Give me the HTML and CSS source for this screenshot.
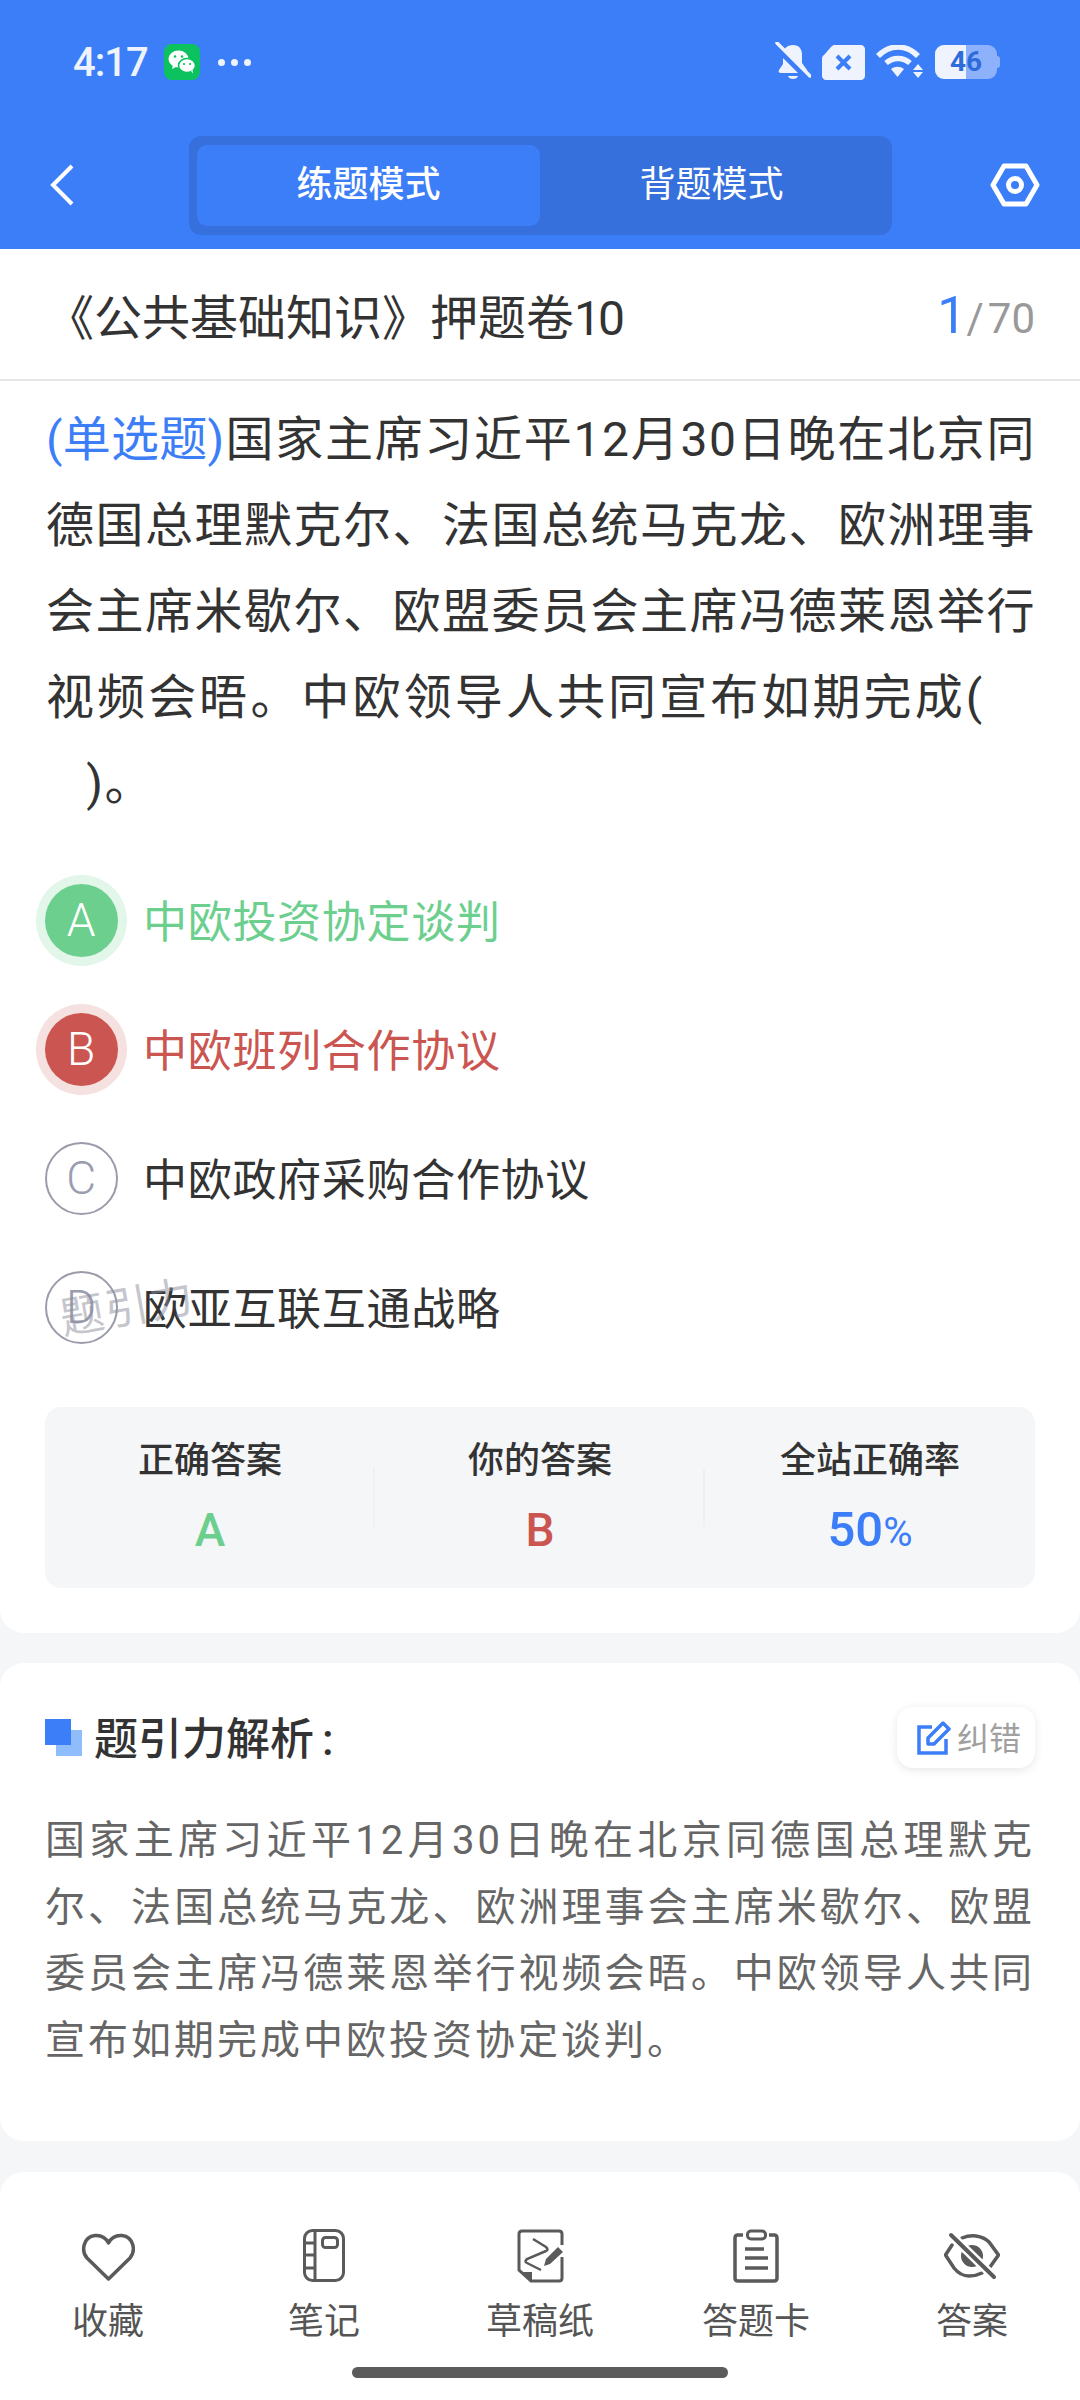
FILE: index.html
```html
<!DOCTYPE html>
<html lang="zh-CN">
<head>
    <meta charset="UTF-8">
    <meta name="viewport" content="width=device-width, initial-scale=1.0">
    <title>题引力</title>
    <link rel="stylesheet" href="styles.css">
</head>
<body>
    <div class="topbar">
        <div class="status">
            <span class="time">4:17</span>
            <svg class="wechat" viewBox="0 0 36 36" width="36" height="36">
                <rect width="36" height="36" rx="8" fill="#0cc25f"/>
                <ellipse cx="14.5" cy="15" rx="10" ry="8.5" fill="#fff"/>
                <path d="M9 21l-1 4 5-2.500z" fill="#fff"/>
                <ellipse cx="23" cy="21.500" rx="8.500" ry="7" fill="#fff" stroke="#0cc25f" stroke-width="1.500"/>
                <path d="M27 27l2 2.500-.5-4z" fill="#fff"/>
                <circle cx="11" cy="12.500" r="1.300" fill="#0cc25f"/>
                <circle cx="18" cy="12.500" r="1.300" fill="#0cc25f"/>
                <circle cx="20" cy="20" r="1.100" fill="#0cc25f"/>
                <circle cx="26" cy="20" r="1.100" fill="#0cc25f"/>
            </svg>
            <span class="dots"><i></i><i></i><i></i></span>
            <span class="status-right">
                <svg viewBox="0 0 36 40" width="36" height="40">
                    <path d="M18 3c6 0 9 4 9 10v8l5 7c1 2 0 3-2 3H6c-2 0-3-1-2-3l4-6v-9c0-6 4-10 10-10z" fill="#eef3fe"/>
                    <path d="M13 34h10c-1 4-9 4-10 0z" fill="#eef3fe"/>
                    <path d="M1 4l33 33" stroke="#3b7ef8" stroke-width="7"/>
                    <path d="M2 1l33 33" stroke="#eef3fe" stroke-width="3.500" stroke-linecap="round"/>
                </svg>
                <svg viewBox="0 0 43 35" width="43" height="35">
                    <path d="M12 0h27c2 0 4 2 4 4v27c0 2-2 4-4 4H4c-2 0-4-2-4-4V14c0-2 .5-3 2-4l7-8c1-1 2-2 3-2z" fill="#eef3fe"/>
                    <path d="M15 11l13 13M28 11L15 24" stroke="#3b7ef8" stroke-width="4"/>
                </svg>
                <svg viewBox="0 0 48 34" width="48" height="34">
                    <path d="M2 11C14-1 30-1 42 11" stroke="#eef3fe" stroke-width="5.500" fill="none"/>
                    <path d="M10 18c7-6 17-6 24 0" stroke="#eef3fe" stroke-width="5.500" fill="none"/>
                    <path d="M15 24c4-3 9-3 13 0l-6.500 8z" fill="#eef3fe"/>
                    <path d="M42 19l5 6H37zM37 27h10l-5 6z" fill="#eef3fe"/>
                </svg>
                <span class="battery"><span class="battery-fill"></span><span class="battery-cap"></span><span class="battery-num">46</span></span>
            </span>
        </div>
        <div class="nav">
            <svg class="back" viewBox="0 0 24 42" width="24" height="42">
                <path d="M22 2L3 21l19 19" stroke="#fff" stroke-width="4" fill="none"/>
            </svg>
            <div class="tabs">
                <div class="tab active">练题模式</div>
                <div class="tab">背题模式</div>
            </div>
            <svg class="hex" viewBox="0 0 50 44" width="50" height="44">
                <path d="M14 3h22l11 19-11 19H14L3 22z" stroke="#fff" stroke-width="5" stroke-linejoin="round" fill="none"/>
                <circle cx="25" cy="22" r="6.500" stroke="#fff" stroke-width="5" fill="none"/>
            </svg>
        </div>
    </div>

    <div class="card main-card">
        <div class="paper">
            <div class="paper-title">《公共基础知识》押题卷<span class="num">10</span></div>
            <div class="paper-count"><span class="now">1</span><span class="sep">/</span>70</div>
        </div>
        <div class="question"><span class="qtype">(单选题)</span>国家主席习近平12月30日晚在北京同德国总理默克尔、法国总统马克龙、欧洲理事会主席米歇尔、欧盟委员会主席冯德莱恩举行<span class="stretch">视频会晤。中欧领导人共同宣布如期完成(</span><br>&nbsp;&nbsp;&nbsp;)。</div>
        <div class="options">
            <div class="option right"><span class="letter">A</span><span class="option-text">中欧投资协定谈判</span></div>
            <div class="option wrong"><span class="letter">B</span><span class="option-text">中欧班列合作协议</span></div>
            <div class="option"><span class="letter">C</span><span class="option-text">中欧政府采购合作协议</span></div>
            <div class="option"><span class="letter">D</span><span class="option-text">欧亚互联互通战略</span></div>
            <div class="watermark">题引力</div>
        </div>
        <div class="result">
            <div class="result-col">
                <div class="result-label">正确答案</div>
                <div class="result-value green">A</div>
            </div>
            <div class="result-col">
                <div class="result-label">你的答案</div>
                <div class="result-value red">B</div>
            </div>
            <div class="result-col">
                <div class="result-label">全站正确率</div>
                <div class="result-value blue">50<small>%</small></div>
            </div>
        </div>
    </div>

    <div class="card analysis">
        <div class="analysis-head">
            <div class="analysis-title"><span class="squares"></span><span class="title-text">题引力解析<span class="colon">:</span></span></div>
            <div class="report">
                <svg viewBox="0 0 34 34" width="34" height="34">
                    <path d="M15 6H2v26h27V18" stroke="#3b7ef8" stroke-width="3.500" fill="none"/>
                    <path d="M11 23v-6L26 2l6 6-15 15z" stroke="#3b7ef8" stroke-width="3.500" fill="none" stroke-linejoin="round"/>
                </svg>
                <span class="report-text">纠错</span>
            </div>
        </div>
        <div class="analysis-text">国家主席习近平12月30日晚在北京同德国总理默克尔、法国总统马克龙、欧洲理事会主席米歇尔、欧盟委员会主席冯德莱恩举行视频会晤。中欧领导人共同宣布如期完成中欧投资协定谈判。</div>
    </div>

    <div class="card toolbar">
        <div class="tools">
            <div class="tool">
                <svg viewBox="0 0 54 54" width="54" height="54">
                    <path d="M27.500 50L6 29C0 22 2 8 14 6.500 20 6 25 9 27.500 14 30 9 35 6 41 6.500 53 8 55 22 49 29z" stroke="#5a5a5a" stroke-width="3.500" fill="none" stroke-linejoin="round"/>
                </svg>
                <span>收藏</span>
            </div>
            <div class="tool">
                <svg viewBox="0 0 54 54" width="54" height="54">
                    <rect x="7.500" y="1.500" width="39" height="50" rx="8" stroke="#5a5a5a" stroke-width="3" fill="none"/>
                    <path d="M18 2v49M7 14h11M7 26h11M7 39h11" stroke="#5a5a5a" stroke-width="3" fill="none"/>
                    <rect x="25.500" y="8.500" width="15" height="10" rx="3" stroke="#5a5a5a" stroke-width="3" fill="none"/>
                </svg>
                <span>笔记</span>
            </div>
            <div class="tool">
                <svg viewBox="0 0 54 54" width="54" height="54">
                    <path d="M49 16V5c0-2-1-3-3-3H9C7 2 6 3 6 5v36l12 11h28c2 0 3-1 3-3V28" stroke="#5a5a5a" stroke-width="3" fill="none"/>
                    <path d="M7 43h12v9z" fill="#5a5a5a"/>
                    <path d="M20 10l13 8c2 2 2 3 0 4L14 30c-2 2-2 3 0 4l14 7" stroke="#5a5a5a" stroke-width="2.500" fill="none"/>
                    <path d="M45 18l5 5-13 12-6 2 2-7z" fill="#5a5a5a"/>
                </svg>
                <span>草稿纸</span>
            </div>
            <div class="tool">
                <svg viewBox="0 0 54 54" width="54" height="54">
                    <path d="M14 6h-5C7 6 6 7 6 9v40c0 2 1 3 3 3h36c2 0 3-1 3-3V9c0-2-1-3-3-3h-5" stroke="#5a5a5a" stroke-width="3.500" fill="none"/>
                    <rect x="18.500" y="2" width="18" height="8" rx="3.500" stroke="#5a5a5a" stroke-width="3" fill="none"/>
                    <path d="M16 20h19M16 29h23M16 39h23" stroke="#5a5a5a" stroke-width="3.500" fill="none"/>
                </svg>
                <span>答题卡</span>
            </div>
            <div class="tool">
                <svg viewBox="0 0 56 54" width="56" height="54">
                    <path d="M18 9c5-2 10-2.500 14-2 6 1 10 3 13 6l9.500 13-8.500 12" stroke="#5a5a5a" stroke-width="3.500" fill="none" stroke-linecap="round"/>
                    <path d="M38 44c-4 2-9 3-13 3-6 0-11-3-15-8L1.500 26 8 16" stroke="#5a5a5a" stroke-width="3.500" fill="none" stroke-linecap="round"/>
                    <circle cx="28" cy="27" r="11" fill="#5a5a5a"/>
                    <path d="M7 6l43 42" stroke="#fff" stroke-width="9"/>
                    <path d="M7 6l43 42" stroke="#5a5a5a" stroke-width="4" stroke-linecap="round"/>
                </svg>
                <span>答案</span>
            </div>
        </div>
        <div class="home-bar"></div>
    </div>
</body>
</html>
```

FILE: styles.css
```css
* {
    box-sizing: border-box;
}
body {
    margin: 0;
    width: 1080px;
    height: 2400px;
    overflow: hidden;
    background-color: #f5f6f8;
    color: #333;
    font-family: Roboto, "Noto Sans CJK SC", sans-serif;
}
.topbar {
    height: 249px;
    background-color: #3b7ef8;
}
.status {
    display: flex;
    align-items: center;
    height: 124px;
    padding: 0 80px 0 73px;
}
.time {
    font-size: 40px;
    font-weight: 500;
    letter-spacing: -1px;
    color: #eef3fe;
    width: 91px;
}
.dots {
    display: flex;
    gap: 6px;
    margin-left: 18px;
}
.dots i {
    width: 7px;
    height: 7px;
    border-radius: 50%;
    background-color: #eef3fe;
}
.status-right {
    display: flex;
    align-items: center;
    margin-left: auto;
    gap: 11px;
}
.battery {
    position: relative;
    width: 65px;
    height: 34px;
}
.battery::before {
    content: "";
    position: absolute;
    left: 0;
    top: 0;
    width: 62px;
    height: 34px;
    border-radius: 9px;
    background-color: #8db2fb;
}
.battery-fill {
    position: absolute;
    left: 0;
    top: 0;
    width: 31px;
    height: 34px;
    border-radius: 9px 0 0 9px;
    background-color: #eef3fe;
}
.battery-cap {
    position: absolute;
    right: 0;
    top: 11px;
    width: 4px;
    height: 12px;
    border-radius: 0 3px 3px 0;
    background-color: #8db2fb;
}
.battery-num {
    position: absolute;
    left: 15px;
    top: 0;
    font-size: 28px;
    line-height: 34px;
    font-weight: 700;
    color: #2f6cdb;
}
.nav {
    display: flex;
    align-items: center;
    height: 99px;
    margin-top: 12px;
    padding: 0 40px 0 50px;
}
.back {
    margin-bottom: 2px;
}
.hex {
    margin-left: auto;
    margin-bottom: 2px;
}
.tabs {
    display: flex;
    width: 703px;
    height: 99px;
    padding: 9px 8px;
    margin-left: 115px;
    border-radius: 12px;
    background-color: #3570dc;
}
.tab {
    width: 343px;
    border-radius: 10px;
    text-align: center;
    font-size: 36px;
    line-height: 81px;
    color: #fff;
}
.tab.active {
    background-color: #3b7ef8;
    font-weight: 500;
}
.card {
    background-color: #fff;
}
.main-card {
    height: 1384px;
    border-radius: 0 0 24px 24px;
}
.paper {
    display: flex;
    align-items: center;
    justify-content: space-between;
    height: 132px;
    padding: 0 45px 0 46px;
    border-bottom: 2px solid #e6e6e6;
}
.paper-title {
    font-size: 48px;
}
.num {
    letter-spacing: -3px;
}
.paper-count {
    margin-top: 3px;
    font-size: 42px;
    color: #999;
}
.now {
    font-size: 52px;
    color: #3b7ef8;
}
.sep {
    margin: 0 4px 0 0;
}
.question {
    padding: 0 44px 0 46px;
    margin-top: 16px;
    font-size: 48px;
    line-height: 86px;
    letter-spacing: 1.5px;
    text-align: justify;
    color: #333;
}
.qtype {
    color: #3b7ef8;
    letter-spacing: 0;
    margin-right: 1px;
}
.stretch {
    letter-spacing: 3.1px;
}
.options {
    position: relative;
    margin-top: 29px;
    padding-left: 45px;
}
.option {
    display: flex;
    align-items: center;
    gap: 25px;
    height: 129px;
    font-size: 44px;
    letter-spacing: 0.7px;
}
.option-text {
    padding-bottom: 3px;
}
.letter {
    width: 73px;
    height: 73px;
    border: 2px solid #9a9caa;
    border-radius: 50%;
    text-align: center;
    font-weight: 300;
    font-size: 46px;
    line-height: 69px;
    color: #9a9dae;
}
.right {
    color: #6ccf8e;
}
.right .letter {
    border: none;
    line-height: 73px;
    color: #fff;
    background-color: #6ccf8e;
    box-shadow: 0 0 0 9px #e2f6e9;
}
.wrong {
    color: #cb5550;
}
.wrong .letter {
    border: none;
    line-height: 73px;
    color: #fff;
    background-color: #cb5550;
    box-shadow: 0 0 0 9px #f5e1e0;
}
.watermark {
    position: absolute;
    left: 59px;
    bottom: 36px;
    font-size: 44px;
    letter-spacing: 1px;
    color: rgba(140, 142, 155, 0.5);
    transform: rotate(-10deg);
}
.result {
    display: flex;
    height: 181px;
    margin: 35px 45px 0;
    padding-top: 30px;
    border-radius: 16px;
    background-color: #f5f6f8;
}
.result-col {
    position: relative;
    flex: 1;
    text-align: center;
}
.result-col + .result-col::before {
    content: "";
    position: absolute;
    left: -2px;
    top: 31px;
    height: 59px;
    width: 2px;
    background-color: #eef0f2;
}
.result-label {
    font-size: 36px;
    line-height: 48px;
    font-weight: 500;
}
.result-value {
    margin-top: 17px;
    font-size: 46px;
    line-height: 56px;
    font-weight: 500;
}
.result-value.blue {
    font-size: 49px;
}
.result-value small {
    font-size: 40px;
    font-weight: 400;
}
.green {
    color: #6ccf8e;
}
.red {
    color: #cb5550;
}
.blue {
    color: #3b7ef8;
}
.analysis {
    height: 478px;
    margin-top: 30px;
    padding: 44px 45px 0;
    border-radius: 24px;
}
.analysis-head {
    display: flex;
    align-items: center;
    justify-content: space-between;
    height: 61px;
}
.analysis-title {
    display: flex;
    align-items: center;
    font-size: 44px;
    font-weight: 500;
}
.title-text {
    padding-bottom: 4px;
}
.colon {
    margin-left: 8px;
}
.squares {
    position: relative;
    width: 37px;
    height: 37px;
    margin-right: 12px;
}
.squares::before {
    content: "";
    position: absolute;
    right: 0;
    bottom: 0;
    width: 26px;
    height: 26px;
    background-color: #8fbcfb;
}
.squares::after {
    content: "";
    position: absolute;
    left: 0;
    top: 0;
    width: 26px;
    height: 26px;
    background-color: #3b7ef8;
}
.report {
    display: flex;
    align-items: center;
    gap: 6px;
    width: 138px;
    height: 61px;
    padding-left: 20px;
    border-radius: 16px;
    box-shadow: 0 2px 10px rgba(0, 0, 0, 0.1);
    font-size: 32px;
    color: #a0a0a0;
}
.report-text {
    padding-bottom: 4px;
}
.analysis-text {
    margin-top: 40px;
    font-size: 40px;
    line-height: 66.500px;
    letter-spacing: 3px;
    text-align: justify;
    color: #666;
}
.toolbar {
    height: 228px;
    margin-top: 31px;
    border-radius: 24px 24px 0 0;
}
.tools {
    display: flex;
    padding-top: 57px;
}
.tool {
    display: flex;
    flex-direction: column;
    align-items: center;
    gap: 15px;
    width: 216px;
    font-size: 36px;
    line-height: 48px;
    color: #555;
}
.home-bar {
    width: 376px;
    height: 11px;
    margin: 21px auto 0;
    border-radius: 6px;
    background-color: #5c5c5c;
}
```
